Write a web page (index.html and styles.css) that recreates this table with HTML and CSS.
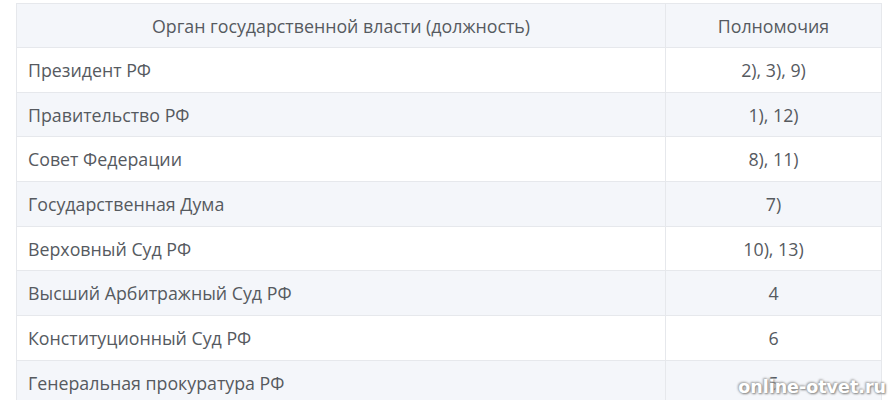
FILE: index.html
```html
<!DOCTYPE html>
<html lang="ru">
<head>
<meta charset="utf-8">
<link rel="stylesheet" href="styles.css">
</head>
<body>
<div class="page">
<table class="tbl">
  <thead>
    <tr><th class="c1">Орган государственной власти (должность)</th><th class="c2">Полномочия</th></tr>
  </thead>
  <tbody>
    <tr><td class="c1">Президент РФ</td><td class="c2">2), 3), 9)</td></tr>
    <tr><td class="c1">Правительство РФ</td><td class="c2">1), 12)</td></tr>
    <tr><td class="c1">Совет Федерации</td><td class="c2">8), 11)</td></tr>
    <tr><td class="c1">Государственная Дума</td><td class="c2">7)</td></tr>
    <tr><td class="c1">Верховный Суд РФ</td><td class="c2">10), 13)</td></tr>
    <tr><td class="c1">Высший Арбитражный Суд РФ</td><td class="c2">4</td></tr>
    <tr><td class="c1">Конституционный Суд РФ</td><td class="c2">6</td></tr>
    <tr><td class="c1">Генеральная прокуратура РФ</td><td class="c2">5</td></tr>
  </tbody>
</table>
<div class="wm">online-otvet.ru</div>
</div>
</body>
</html>
```
FILE: styles.css
```css
html, body {
  margin: 0;
  padding: 0;
  background: #ffffff;
  overflow: hidden;
}
.page {
  position: relative;
  padding: 3px 0 0 16px;
  width: 892px;
  height: 400px;
  box-sizing: border-box;
}
.tbl {
  border-collapse: collapse;
  width: 865px;
  font-family: "Open Sans", "Noto Sans", sans-serif;
  font-size: 17.8px;
  color: #565a5f;
  table-layout: fixed;
}
.tbl th, .tbl td {
  border: 1px solid #e6e8ec;
  height: 44px;
  box-sizing: border-box;
  padding: 0 11px;
  font-weight: 400;
  line-height: 22px;
}
.tbl th {
  background: #f4f6fa;
  text-align: center;
}
.tbl .c1 { width: 649px; }
.tbl .c2 { width: 216px; text-align: center; }
.tbl td.c1 { text-align: left; }
.tbl tbody tr:nth-child(even) td { background: #f4f6fa; }
.tbl tbody tr:nth-child(odd) td { background: #ffffff; }
.tbl tbody td { height: 44.7px; }
.wm {
  position: absolute;
  right: 6px;
  bottom: 3px;
  font-family: "DejaVu Sans", sans-serif;
  font-weight: bold;
  font-size: 17.5px;
  color: #ffffff;
  text-shadow: 1px 1px 2px #8a8a8a, -1px -1px 2px #b0b0b0, 0 0 3px #999;
}
```
